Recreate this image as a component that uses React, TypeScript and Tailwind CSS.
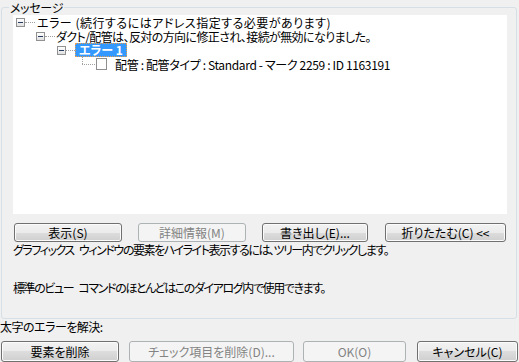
import React from "react";

const font = {
  fontFamily: '"Noto Sans CJK JP", "Noto Sans", sans-serif',
};

function Btn({ label, w, h, disabled, className = "" }: { label: string; w: string; h: string; disabled?: boolean; className?: string }) {
  return (
    <div
      className={`${w} ${h} ${className} flex items-center justify-center rounded-[3px] border text-[12px] leading-[14px] ${
        disabled
          ? "border-[#adb2b5] bg-[#f4f4f4] text-[#838383]"
          : "border-[#707070] bg-[linear-gradient(#f2f2f2_0%,#ebebeb_50%,#dddddd_50%,#cfcfcf_100%)] shadow-[inset_0_0_0_1px_#fbfbfb] text-black"
      }`}
    >
      {label}
    </div>
  );
}

function Box() {
  return (
    <div className="w-[9px] h-[9px] border border-[#919191] bg-[linear-gradient(#ffffff,#e0e0e0)] flex items-center justify-center shrink-0">
      <div className="w-[5px] h-[1px] bg-[#2a3b60]" />
    </div>
  );
}

function Dots({ w }: { w: string }) {
  return <div className={`${w} h-0 border-t border-dotted border-[#a0a0a0] shrink-0`} />;
}

export default function App() {
  return (
    <div
      className="w-[519px] h-[362px] bg-[#f0f0f0] flex flex-col overflow-hidden text-[12px] leading-[14px] text-black [font-feature-settings:'palt']"
      style={font}
    >
      <div className="relative mt-[7px] ml-[1px] w-[516px] h-[312px] shrink-0 border border-[#d5dfe5] rounded-[3px] flex flex-col">
        <div className="absolute left-[7px] top-[-7px] px-[1px] bg-[#f0f0f0] leading-[13px] tracking-[-0.3px]">メッセージ</div>
        <div className="ml-[11px] mt-[7px] w-[494px] h-[199px] bg-white flex flex-col shrink-0">
          <div className="h-[14px] flex items-center pl-[3px]">
            <Box />
            <Dots w="w-[10px]" />
            <span className="ml-[2px] whitespace-nowrap tracking-[0.5px] leading-[13px]">エラー (続行するにはアドレス指定する必要があります)</span>
          </div>
          <div className="h-[14px] flex items-center pl-[23px]">
            <Box />
            <Dots w="w-[10px]" />
            <span className="ml-[1px] whitespace-nowrap tracking-[-0.6px] leading-[13px]">ダクト/配管は、反対の方向に修正され、接続が無効になりました。</span>
          </div>
          <div className="h-[14px] flex items-center pl-[44px]">
            <Box />
            <Dots w="w-[9px]" />
            <span className="h-[14px] px-[3px] bg-[#3399ff] text-white font-bold border border-dotted border-[#e8a050] leading-[12px] whitespace-nowrap">エラー 1</span>
          </div>
          <div className="h-[14px] flex items-center pl-[69px]">
            <div className="relative w-[14px] h-[14px] shrink-0">
              <div className="absolute left-0 top-0 h-[7px] border-l border-dotted border-[#a0a0a0]" />
              <div className="absolute left-0 top-[7px] w-[13px] border-t border-dotted border-[#a0a0a0]" />
            </div>
            <div className="w-[11px] h-[12px] border border-[#8e8f8f] bg-white shrink-0" />
            <span className="ml-[8px] whitespace-nowrap tracking-[-0.35px] leading-[13px]">配管 : 配管タイプ : Standard - マーク 2259 : ID 1163191</span>
          </div>
        </div>
        <div className="flex mt-[9px] ml-[12px] shrink-0">
          <Btn label="表示(S)" w="w-[108px]" h="h-[19px]" />
          <Btn label="詳細情報(M)" w="w-[108px]" h="h-[19px]" disabled className="ml-[16px]" />
          <Btn label="書き出し(E)..." w="w-[106px]" h="h-[19px]" className="ml-[16px]" />
          <Btn label="折りたたむ(C) <<" w="w-[121px]" h="h-[19px]" className="ml-[17px]" />
        </div>
        <div className="ml-[11px] mt-[1px] whitespace-nowrap tracking-[-1.45px] [word-spacing:4px]">グラフィックス ウィンドウの要素をハイライト表示するには、ツリー内でクリックします。</div>
        <div className="ml-[11px] mt-[24px] whitespace-nowrap tracking-[-1.4px] [word-spacing:4px]">標準のビュー コマンドのほとんどはこのダイアログ内で使用できます。</div>
      </div>
      <div className="mt-[1px] whitespace-nowrap tracking-[-0.5px]">太字のエラーを解決:</div>
      <div className="flex mt-[7px] ml-[1px]">
        <Btn label="要素を削除" w="w-[118px]" h="h-[21px]" />
        <Btn label="チェック項目を削除(D)..." w="w-[165px]" h="h-[21px]" disabled className="ml-[10px]" />
        <Btn label="OK(O)" w="w-[103px]" h="h-[21px]" disabled className="ml-[9px]" />
        <Btn label="キャンセル(C)" w="w-[101px]" h="h-[21px]" className="ml-[11px]" />
      </div>
    </div>
  );
}
